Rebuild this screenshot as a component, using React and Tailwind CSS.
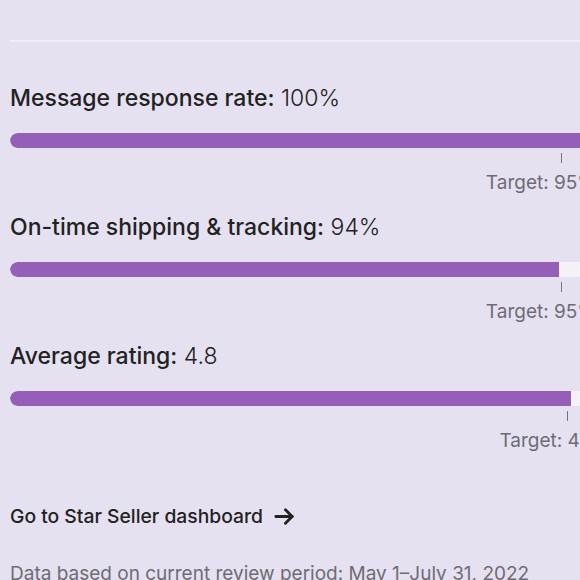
import React from 'react';

const METRICS = [
  { label: 'Message response rate:', value: '100%', fill: 580, tick: 551, target: 'Target: 95%' },
  { label: 'On-time shipping & tracking:', value: '94%', fill: 549, tick: 551, target: 'Target: 95%' },
  { label: 'Average rating:', value: '4.8', fill: 561, tick: 557, target: 'Target: 4.8' },
];

const Metric = ({ label, value, fill, tick, target, first }) => (
  <div className={first ? 'mt-[42px]' : 'mt-[18px]'}>
    <h3 className="text-[23px] leading-[28px] text-[#222222]">
      <span className="font-medium">{label}</span> <span className="font-light">{value}</span>
    </h3>
    <div className="mt-[21px] h-[15px] w-[580px] rounded-full bg-[#f4f2f7] overflow-hidden">
      <div className="h-full rounded-l-full bg-[#955fb7]" style={{ width: fill }} />
    </div>
    <div className="relative mt-[5px] h-[10px] w-[580px]">
      <div className="absolute top-0 h-[10px] w-px bg-[#77737c]" style={{ left: tick }} />
    </div>
    <div className="mt-[8px] w-[586px] text-right text-[19px] leading-[24px] text-[#6f6b75] whitespace-nowrap">
      {target}
    </div>
  </div>
);

export default function App() {
  return (
    <div
      className="w-[580px] h-[580px] overflow-hidden bg-[#e6e1f0]"
      style={{ fontFamily: 'Inter, "Noto Sans", sans-serif' }}
    >
      <div className="w-[620px] pl-[10px]">
        <div className="pt-[40px]">
          <div className="h-[2px] w-[600px] bg-[#f1eef8]" />
        </div>
        {METRICS.map((m, i) => (
          <Metric key={m.label} {...m} first={i === 0} />
        ))}
        <a href="#" className="mt-[51px] flex items-center gap-[10px] text-[19.3px] leading-[24px] font-medium text-[#222222]">
          <span>Go to Star Seller dashboard</span>
          <svg width="23" height="23" viewBox="0 0 24 24" fill="none" stroke="#222222" strokeWidth="3" strokeLinecap="round" strokeLinejoin="round">
            <path d="M3 12h17" />
            <path d="M13 5l7 7-7 7" />
          </svg>
        </a>
        <p className="mt-[34px] text-[19px] leading-[24px] text-[#6f6b75] whitespace-nowrap">
          Data based on current review period: May 1–July 31, 2022
        </p>
      </div>
    </div>
  );
}
